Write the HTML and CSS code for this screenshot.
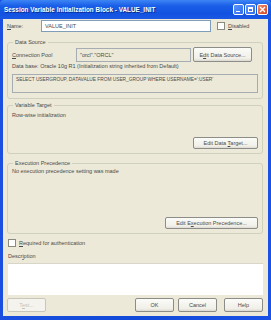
FILE: index.html
```html
<!DOCTYPE html>
<html lang="en">
<head>
    <meta charset="UTF-8">
    <title>Session Variable Initialization Block</title>
    <link rel="stylesheet" href="styles.css">
</head>
<body>
    <div class="window">
        <div class="titlebar">
            <span class="title">Session Variable Initialization Block - VALUE_INIT</span>
            <div class="controls">
                <span class="ctl min"><span class="bar"></span></span>
                <span class="ctl max"><span class="box"></span></span>
                <span class="ctl close">
                    <svg width="7" height="7" viewBox="0 0 7 7"><path d="M1 1L6 6M6 1L1 6" stroke="#fff" stroke-width="1.4"/></svg>
                </span>
            </div>
        </div>
        <div class="content">
            <div class="name-row">
                <span class="name-label"><u>N</u>ame:</span>
                <div class="field name-field">VALUE_INIT</div>
                <span class="check"></span>
                <span class="check-label"><u>D</u>isabled</span>
            </div>

            <div class="group data-source">
                <div class="legend">Data Source</div>
                <div class="pool-row">
                    <span class="pool-label"><u>C</u>onnection Pool</span>
                    <div class="field readonly">"orcl"."ORCL"</div>
                    <button class="btn pool-btn">E<u>d</u>it Data Source...</button>
                </div>
                <div class="db-line">Data base: Oracle 10g R1 (Initialization string inherited from Default)</div>
                <div class="sql-box">SELECT USERGROUP, DATAVALUE FROM USER_GROUP WHERE USERNAME=':USER'</div>
            </div>

            <div class="group target">
                <div class="legend">Variable Target</div>
                <div class="group-text">Row-wise initialization</div>
                <div class="btn-right"><button class="btn target-btn">Edit Data <u>T</u>arget...</button></div>
            </div>

            <div class="group precedence">
                <div class="legend">Execution Precedence</div>
                <div class="group-text">No execution precedence setting was made</div>
                <div class="btn-right"><button class="btn prec-btn">Edit E<u>x</u>ecution Precedence...</button></div>
            </div>

            <div class="auth-row">
                <span class="check"></span>
                <span class="check-label"><u>R</u>equired for authentication</span>
            </div>
            <div class="desc-label">Descr<u>i</u>ption</div>
            <div class="desc-box"></div>

            <div class="footer">
                <button class="btn test-btn" disabled>T<u>e</u>st...</button>
                <div class="footer-right">
                    <button class="btn">OK</button>
                    <button class="btn">Cancel</button>
                    <button class="btn help-btn">Help</button>
                </div>
            </div>
        </div>
    </div>
</body>
</html>
```

FILE: styles.css
```css
html, body {
    margin: 0;
    padding: 0;
}
body {
    font-family: "Liberation Sans", Arial, sans-serif;
    font-size: 5.5px;
    color: #4a4a4a;
    background: #fff;
}
.window {
    width: 271px;
    height: 320px;
    box-sizing: border-box;
    background: linear-gradient(to right, #1a4fe0, #1149d8 50%, #1a52e6);
    padding: 0 3px 4px 3px;
    display: flex;
    flex-direction: column;
}
.titlebar {
    height: 19px;
    flex-shrink: 0;
    display: flex;
    align-items: center;
    justify-content: space-between;
    background: linear-gradient(to bottom, #3d86f4 0%, #1a5fe8 30%, #1252e0 70%, #1a58e4 100%);
    margin: 0 -3px;
    padding: 0 3px 0 4px;
    border-radius: 4px 4px 0 0;
}
.title {
    color: #fff;
    font-weight: bold;
    font-size: 6.3px;
    letter-spacing: 0.05px;
    text-shadow: 1px 1px 0 #0a2a8a;
}
.controls {
    display: flex;
    gap: 1px;
}
.ctl {
    width: 11px;
    height: 11px;
    box-sizing: border-box;
    border: 1px solid #fff;
    border-radius: 2px;
    background: linear-gradient(135deg, #5c95f8, #2d6cf0);
    display: flex;
    align-items: center;
    justify-content: center;
    position: relative;
}
.ctl.close {
    background: linear-gradient(135deg, #f08a6a, #d9431c);
}
.bar {
    position: absolute;
    left: 2px;
    bottom: 2px;
    width: 4px;
    height: 1px;
    background: #fff;
}
.box {
    width: 5px;
    height: 5px;
    box-sizing: border-box;
    border: 1px solid #fff;
    border-top-width: 2px;
}
.content {
    flex: 1;
    background: #ece9d8;
    padding: 1px 5px 0 4px;
    display: flex;
    flex-direction: column;
}
.content > * {
    flex-shrink: 0;
}
.name-row {
    display: flex;
    align-items: center;
    height: 12px;
}
.name-label {
    width: 34px;
}
.field {
    height: 12px;
    box-sizing: border-box;
    border: 1px solid #7f9db9;
    background: #fff;
    padding: 0 3px;
    line-height: 10px;
}
.name-field {
    width: 170px;
}
.check {
    width: 6px;
    height: 6px;
    border: 1px solid #8a8a80;
    background: #fff;
    margin: 0 3px 0 6px;
}
.check-label {
    line-height: 8px;
}
.group {
    box-sizing: border-box;
    padding: 0 4px;
    border: 1px solid #d0d0bf;
    border-radius: 3px;
}
.legend {
    display: table;
    margin: -5px 0 0 1px;
    padding: 0 2px;
    line-height: 8px;
    background: #ece9d8;
}
.data-source {
    margin-top: 10px;
    height: 57px;
}
.pool-row {
    display: flex;
    align-items: center;
    margin-top: 1px;
    height: 15px;
}
.pool-label {
    width: 64px;
}
.readonly {
    width: 115px;
    height: 14px;
    line-height: 12px;
    background: #ece9d8;
    border-color: #a5acb2;
}
.btn {
    font-family: "Liberation Sans", Arial, sans-serif;
    font-size: 5.5px;
    color: #4a4a4a;
    background: linear-gradient(to bottom, #fbfbf8, #f0efe8 80%, #dcdad0);
    border: 1px solid #8c8c88;
    border-radius: 2px;
    height: 13px;
    padding: 0;
    line-height: 10px;
}
.pool-btn {
    width: 59px;
    height: 15px;
    margin-left: 2px;
}
.db-line {
    line-height: 8px;
}
.sql-box {
    margin-top: 4px;
    height: 19px;
    box-sizing: border-box;
    border: 1px solid #a5acb2;
    padding: 1px 3px;
    line-height: 8px;
    font-size: 4.8px;
    white-space: nowrap;
}
.group-text {
    line-height: 8px;
}
.btn-right {
    display: flex;
    justify-content: flex-end;
}
.target {
    margin-top: 6px;
    height: 49px;
}
.target .group-text {
    margin-top: 2px;
}
.target .btn-right {
    margin-top: 18px;
}
.target-btn {
    width: 65px;
    height: 12px;
}
.precedence {
    margin-top: 9px;
    height: 71px;
}
.precedence .btn-right {
    margin-top: 42px;
}
.prec-btn {
    width: 93px;
    height: 12px;
}
.auth-row {
    display: flex;
    align-items: center;
    margin-top: 5px;
    height: 8px;
}
.auth-row .check {
    margin-left: 1px;
}
.desc-label {
    margin: 5px 0 0 1px;
    line-height: 8px;
}
.desc-box {
    box-sizing: border-box;
    margin: 3px 0 0 1px;
    height: 32px;
    background: #fff;
    border-top: 1px solid #d8d6c8;
}
.footer {
    display: flex;
    align-items: center;
    margin-top: 3px;
}
.footer .btn {
    width: 39px;
    height: 14px;
}
.test-btn {
    color: #c6c4b8;
    border-color: #c9c7ba;
    background: #f4f3ee;
}
.footer-right {
    margin-left: auto;
    display: flex;
    gap: 4px;
}
.help-btn {
    margin-left: 3px;
}
```
